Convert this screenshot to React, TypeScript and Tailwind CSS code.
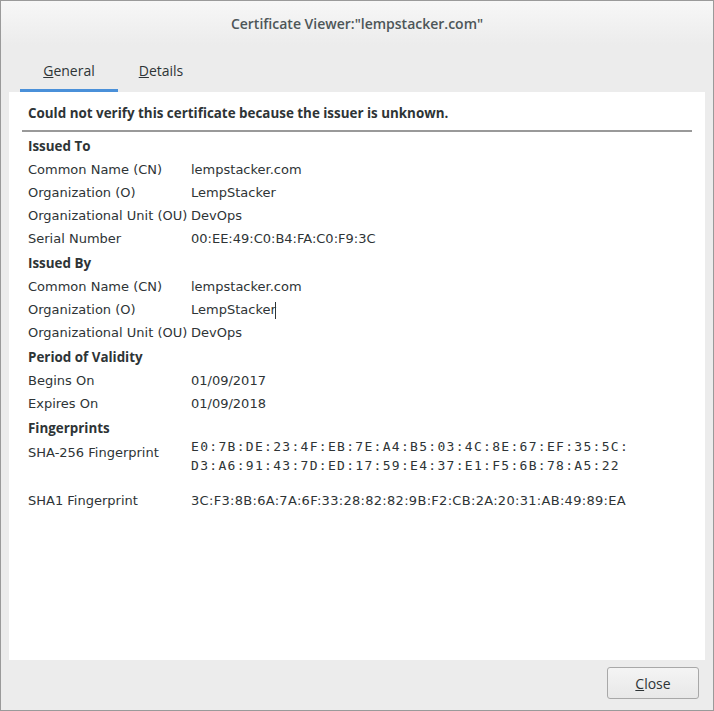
import React from 'react'

type Row = { label: string; value: React.ReactNode }

const sections: { title: string; rows: Row[] }[] = [
  {
    title: 'Issued To',
    rows: [
      { label: 'Common Name (CN)', value: 'lempstacker.com' },
      { label: 'Organization (O)', value: 'LempStacker' },
      { label: 'Organizational Unit (OU)', value: 'DevOps' },
      { label: 'Serial Number', value: '00:EE:49:C0:B4:FA:C0:F9:3C' }
    ]
  },
  {
    title: 'Issued By',
    rows: [
      { label: 'Common Name (CN)', value: 'lempstacker.com' },
      {
        label: 'Organization (O)',
        value: (
          <>
            LempStacker<span className="inline-block w-px h-[17px] bg-[#2e3436] align-middle -ml-px" />
          </>
        )
      },
      { label: 'Organizational Unit (OU)', value: 'DevOps' }
    ]
  },
  {
    title: 'Period of Validity',
    rows: [
      { label: 'Begins On', value: '01/09/2017' },
      { label: 'Expires On', value: '01/09/2018' }
    ]
  }
]

const boldFont = { fontFamily: '"Open Sans", sans-serif' }

const App: React.FC = () => {
  return (
    <div
      className="w-[714px] h-[711px] border border-[#9a9a9a] bg-[#ececec] flex flex-col text-[#2e3436] overflow-hidden"
      style={{ fontFamily: '"DejaVu Sans", sans-serif' }}
    >
      {/* title bar */}
      <div
        className="h-[44px] shrink-0 flex items-center justify-center bg-gradient-to-b from-[#f7f7f7] to-[#ececec] text-[#4d5658] text-[14px] font-semibold"
        style={{ fontFamily: '"Open Sans", sans-serif' }}
      >
        Certificate Viewer:"lempstacker.com"
      </div>

      {/* tabs */}
      <div
        className="h-[47px] shrink-0 flex items-end pl-[9px] text-[14px]"
        style={{ fontFamily: '"Open Sans", sans-serif' }}
      >
        <div className="w-[98px] h-[33px] flex justify-center pt-[1px] border-b-[3px] border-[#4a90d9] ml-[10px]">
          <span>
            <u>G</u>eneral
          </span>
        </div>
        <div className="w-[86px] h-[33px] flex justify-center pt-[1px]">
          <span>
            <u>D</u>etails
          </span>
        </div>
      </div>

      {/* content */}
      <div className="mx-[8px] h-[568px] shrink-0 bg-white text-[13px] leading-[23px] pt-[10px]">
        <div className="pl-[19px] font-bold text-[13.4px]" style={boldFont}>
          Could not verify this certificate because the issuer is unknown.
        </div>
        <div className="mx-[13px] mt-[5px] h-[2px] bg-[#999999]" />
        <div className="pl-[19px] pt-[3px]">
          {sections.map((s) => (
            <div key={s.title} className="mb-[2px]">
              <div className="font-bold text-[13.4px]" style={boldFont}>
                {s.title}
              </div>
              {s.rows.map((r, i) => (
                <div key={i} className="flex">
                  <div className="w-[163px] shrink-0">{r.label}</div>
                  <div>{r.value}</div>
                </div>
              ))}
            </div>
          ))}
          <div className="font-bold text-[13.4px]" style={boldFont}>
            Fingerprints
          </div>
          <div className="flex">
            <div className="w-[163px] shrink-0 pt-[1px]">SHA-256 Fingerprint</div>
            <div
              className="text-[13px] leading-[19px] tracking-[1.3px] -mt-[3px]"
              style={{ fontFamily: '"DejaVu Sans Mono", monospace' }}
            >
              E0:7B:DE:23:4F:EB:7E:A4:B5:03:4C:8E:67:EF:35:5C:
              <br />
              D3:A6:91:43:7D:ED:17:59:E4:37:E1:F5:6B:78:A5:22
            </div>
          </div>
          <div className="flex mt-[14px]">
            <div className="w-[163px] shrink-0">SHA1 Fingerprint</div>
            <div className="tracking-[0.3px]">3C:F3:8B:6A:7A:6F:33:28:82:82:9B:F2:CB:2A:20:31:AB:49:89:EA</div>
          </div>
        </div>
      </div>

      {/* footer */}
      <div className="flex justify-end pr-[14px] pt-[7px]">
        <button
          className="w-[92px] h-[32px] rounded-[3px] border border-[#a8a8a8] bg-gradient-to-b from-[#f4f4f4] to-[#e8e8e8] text-[14px] text-[#2e3436]"
          style={{ fontFamily: '"Open Sans", sans-serif' }}
        >
          <u>C</u>lose
        </button>
      </div>
    </div>
  )
}

export default App
